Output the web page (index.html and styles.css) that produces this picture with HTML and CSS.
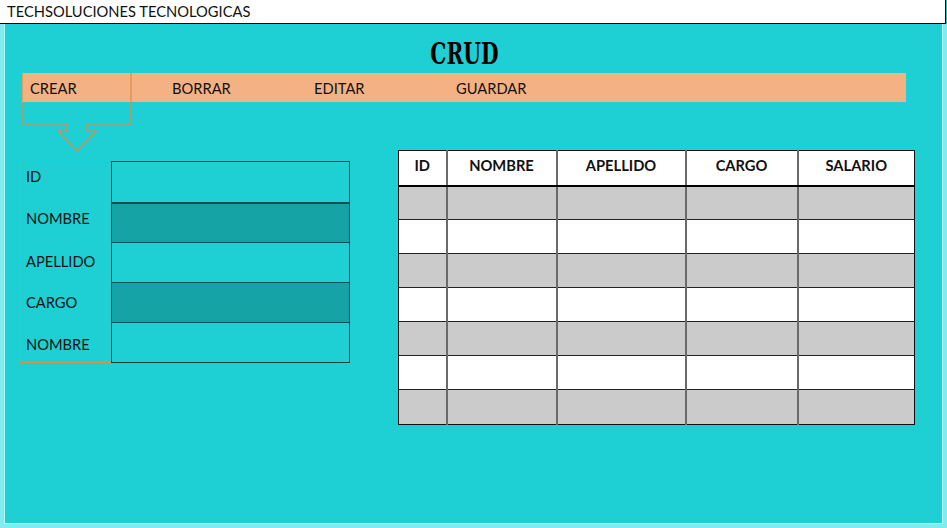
FILE: index.html
```html
<!DOCTYPE html>
<html lang="es">
<head>
<meta charset="utf-8">
<title>CRUD</title>
<link rel="stylesheet" href="styles.css">
</head>
<body>
<header class="topbar">TECHSOLUCIONES TECNOLOGICAS</header>
<main class="frame">
  <div class="content">
    <h1 class="title"><span class="title-text">CRUD</span></h1>
    <nav class="menu">
      <span class="menu-item menu-item--active">CREAR</span>
      <span class="menu-item">BORRAR</span>
      <span class="menu-item">EDITAR</span>
      <span class="menu-item">GUARDAR</span>
      <svg class="bracket" width="112" height="82" viewBox="0 0 112 82">
        <path d="M1 0 V51 H46 V58 H37 L56 78 L75 58 H66 V51 H110 V0" fill="none" stroke="#e58a45" stroke-width="1.2"/>
      </svg>
    </nav>
    <section class="lower">
      <form class="form">
        <div class="labels">
          <span class="label">ID</span>
          <span class="label">NOMBRE</span>
          <span class="label">APELLIDO</span>
          <span class="label">CARGO</span>
          <span class="label">NOMBRE</span>
        </div>
        <div class="fields">
          <div class="field"></div>
          <div class="field field--dark"></div>
          <div class="field"></div>
          <div class="field field--dark"></div>
          <div class="field"></div>
        </div>
      </form>
      <table class="grid">
        <colgroup>
          <col class="c1"><col class="c2"><col class="c3"><col class="c4"><col class="c5">
        </colgroup>
        <thead>
          <tr><th>ID</th><th>NOMBRE</th><th>APELLIDO</th><th>CARGO</th><th>SALARIO</th></tr>
        </thead>
        <tbody>
          <tr class="gray"><td></td><td></td><td></td><td></td><td></td></tr>
          <tr><td></td><td></td><td></td><td></td><td></td></tr>
          <tr class="gray"><td></td><td></td><td></td><td></td><td></td></tr>
          <tr><td></td><td></td><td></td><td></td><td></td></tr>
          <tr class="gray"><td></td><td></td><td></td><td></td><td></td></tr>
          <tr><td></td><td></td><td></td><td></td><td></td></tr>
          <tr class="gray"><td></td><td></td><td></td><td></td><td></td></tr>
        </tbody>
      </table>
    </section>
  </div>
</main>
</body>
</html>
```
FILE: styles.css
```css
* { box-sizing: border-box; }
html, body { margin: 0; padding: 0; }
body {
  width: 947px;
  height: 528px;
  overflow: hidden;
  background: #1ecfd3;
  font-family: Lato, "Open Sans", sans-serif;
  color: #111;
}
.topbar {
  width: 946px;
  height: 24px;
  background: #fff;
  border-bottom: 1px solid #000;
  border-right: 1px solid #000;
  padding: 2px 0 0 7px;
  font-size: 14.7px;
  line-height: 18px;
}
.frame {
  height: 504px;
  background: #1ecfd3;
  border-left: 4px solid #7fecef;
  border-right: 4px solid #7fecef;
  border-bottom: 4px solid #7fecef;
  box-shadow: inset 1px 0 0 #b8f6f7, inset -1px 0 0 #b8f6f7, inset 0 -1px 0 #b8f6f7;
}
.content {
  padding-left: 18px;
}
.title {
  width: 884px;
  margin: 0;
  padding-top: 14px;
  height: 49px;
  text-align: center;
  font-family: "DejaVu Serif Condensed", "DejaVu Serif", serif;
  font-weight: bold;
  font-size: 30px;
  line-height: 32px;
  color: #000;
}
.title-text {
  display: inline-block;
  transform: scaleX(0.75);
}
.menu {
  position: relative;
  width: 884px;
  height: 29px;
  background: #f4b183;
  display: flex;
  align-items: center;
  font-size: 14.7px;
}
.menu-item {
  width: 142px;
  padding-left: 8px;
}
.bracket {
  position: absolute;
  left: -1px;
  top: 0;
}
.lower {
  display: flex;
  align-items: flex-start;
  margin-top: 48px;
}
.form {
  display: flex;
  margin: 11px 0 0 -3px;
}
.labels {
  width: 92px;
  display: flex;
  flex-direction: column;
  border-left: 1px solid #e58a45;
  border-bottom: 2px solid #e58a45;
  border-top: 1px solid rgba(229,138,69,0.35);
}
.label {
  height: 40px;
  padding: 5px 0 0 6px;
  font-size: 14.7px;
}
.label:nth-child(2) { padding-top: 7px; }
.label:nth-child(3) { padding-top: 10px; }
.label:nth-child(4) { padding-top: 11px; }
.label:last-child { padding-top: 13px; height: 39px; }
.fields {
  width: 239px;
  border: 1px solid #0b3f41;
}
.field {
  height: 40px;
  background: #1ecfd3;
  border-top: 1px solid #0b4f52;
}
.field:first-child { border-top: none; }
.field:nth-child(2) { border-top-width: 2px; }
.field--dark { background: #16a3a6; }
.grid {
  margin-left: 48px;
  width: 516px;
  table-layout: fixed;
  border-collapse: collapse;
  border: 1.5px solid #111;
  background: #fff;
}
.grid th {
  height: 35px;
  font-size: 14.7px;
  font-weight: bold;
  text-align: center;
  vertical-align: top;
  padding: 5px 0 0;
  border-bottom: 2px solid #000;
  border-left: 2px solid #6a6a6a;
}
.grid td {
  height: 34px;
  border-top: 1px solid #222;
  border-left: 2px solid #6a6a6a;
  padding: 0;
}
.grid tbody tr:last-child td { height: 35px; }
.grid th:first-child, .grid td:first-child { border-left: none; }
.grid tr.gray td { background: #cbcbcb; }
.c1 { width: 48px; }
.c2 { width: 110px; }
.c3 { width: 129px; }
.c4 { width: 112px; }
.c5 { width: 117px; }
```
